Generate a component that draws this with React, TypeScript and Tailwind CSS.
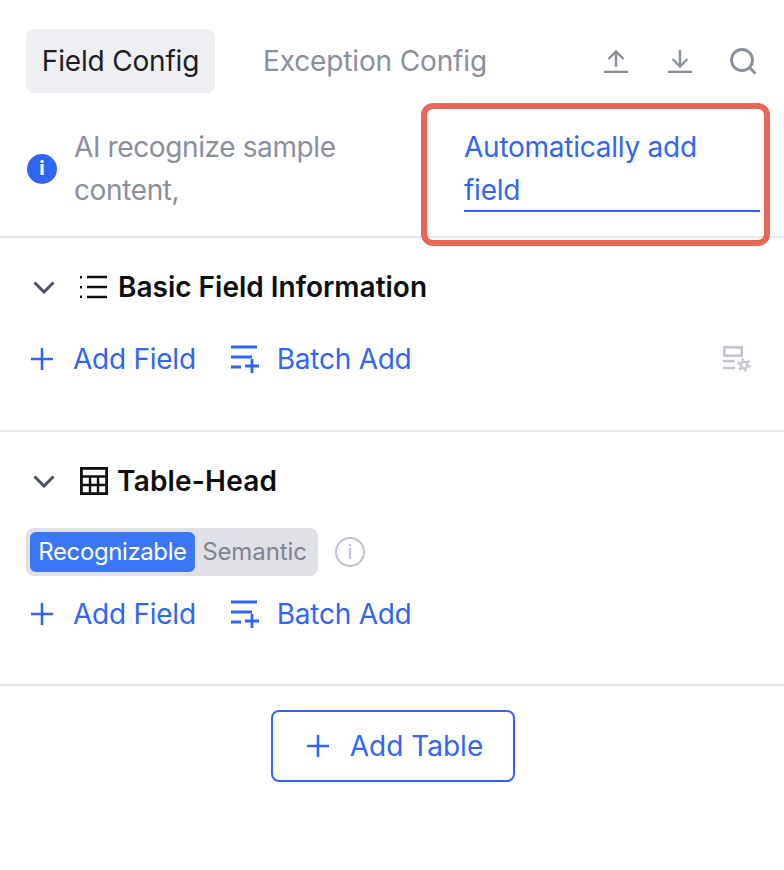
const BLUE = "#2f66f6";

const UploadIcon = ({ down = false }: { down?: boolean }) => (
  <svg width="24" height="24" viewBox="0 0 24 24" fill="none" stroke="#8b8f9c" strokeWidth="2.4">
    <path d="M0 23h24" strokeWidth="2.6" />
    {down ? <path d="M12 1v16M4.5 10l7.5 7.5 7.5-7.5" /> : <path d="M12 18V2.5M4.5 10L12 2.5l7.5 7.5" />}
  </svg>
);

const SearchIcon = () => (
  <svg width="27" height="27" viewBox="0 0 27 27" fill="none" stroke="#8b8f9c" strokeWidth="2.8">
    <circle cx="12" cy="12" r="10.5" />
    <path d="M19.5 19.5l6 6" />
  </svg>
);

const PlusIcon = () => (
  <svg width="22" height="22" viewBox="0 0 22 22" fill="none" stroke={BLUE} strokeWidth="2.6">
    <path d="M11 0v22M0 11h22" />
  </svg>
);

const BatchIcon = () => (
  <svg width="30" height="28" viewBox="0 0 30 28" fill="none" stroke={BLUE} strokeWidth="2.8">
    <path d="M1 2h26M1 12h21M1 22h10M15 21h14M22 14v14" />
  </svg>
);

const Chevron = () => (
  <svg width="22" height="14" viewBox="0 0 22 14" fill="none" stroke="#4c5261" strokeWidth="3">
    <path d="M1.5 2.5L11 12l9.5-9.5" />
  </svg>
);

const ListIcon = () => (
  <svg width="27" height="24" viewBox="0 0 27 24" fill="none" stroke="#111" strokeWidth="2.6">
    <path d="M7 2h20M7 12h20M7 22h20" />
    <path d="M1 1v2.4M1 11v2.4M1 20.6v2.4" strokeWidth="2" />
  </svg>
);

const TableIcon = () => (
  <svg width="28" height="28" viewBox="0 0 28 28" fill="none" stroke="#111" strokeWidth="2.8">
    <rect x="1.4" y="1.4" width="25.2" height="25.2" />
    <path d="M1 9.5h26M1 18h26M10 9.5V27M18 9.5V27" strokeWidth="2.4" />
  </svg>
);

const FieldSettingIcon = () => (
  <svg width="28" height="26" viewBox="0 0 28 26" fill="none" stroke="#c3c6d0" strokeWidth="2.6">
    <rect x="1.3" y="1.3" width="17.4" height="8.4" />
    <path d="M0 15h12M0 22h12" />
    <circle cx="21" cy="19" r="3.4" strokeWidth="2.4" />
    <circle cx="21" cy="19" r="5.6" strokeWidth="2.4" strokeDasharray="2.6 3.26" />
  </svg>
);

const FieldActions = () => (
  <div className="flex items-center text-[28px] leading-[44px] tracking-[-0.25px] text-[#2f66f6]">
    <span className="ml-[1px]"><PlusIcon /></span>
    <span className="ml-[20px]">Add Field</span>
    <span className="ml-[34px]"><BatchIcon /></span>
    <span className="ml-[17px]">Batch Add</span>
  </div>
);

export default function App() {
  return (
    <div className="relative w-[784px] h-[870px] bg-white overflow-hidden font-['Inter',sans-serif]">
      {/* tabs */}
      <div className="flex items-center pt-[29px] pl-[26px] pr-[27px]">
        <div className="w-[189px] h-[64px] rounded-lg bg-[#eeeff3] flex items-center justify-center text-[28px] tracking-[-0.18px] text-[#1c1e24]">
          Field Config
        </div>
        <div className="ml-[48px] text-[28px] tracking-[-0.14px] text-[#8b8f9c]">Exception Config</div>
        <div className="ml-auto flex items-center">
          <UploadIcon />
          <span className="ml-[40px]"><UploadIcon down /></span>
          <span className="ml-[38px]"><SearchIcon /></span>
        </div>
      </div>

      {/* recognize notice */}
      <div className="mt-[10px] h-[135px] border-b-2 border-[#e6e6ec] flex items-center pl-[27px] pb-[2px] text-[28px] leading-[43px]">
        <div className="w-[30px] h-[30px] rounded-full bg-[#2f66f6] flex items-center justify-center text-white text-[20px] font-bold shrink-0">
          i
        </div>
        <div className="ml-[17px] w-[300px] shrink-0 tracking-[-0.38px] text-[#8b8f9c]">AI recognize sample content,</div>
        <div className="ml-[90px] w-[296px] h-[86px] shrink-0 tracking-[-0.25px] text-[#2f66f6] border-b-2 border-[#2f66f6]">Automatically add field</div>
      </div>

      {/* basic fields */}
      <div className="h-[194px] border-b-2 border-[#e6e6ec] pl-[30px] pr-[33px] pt-[27px]">
        <div className="flex items-center h-[44px]">
          <span className="ml-[3px] flex"><Chevron /></span>
          <span className="ml-[25px] flex"><ListIcon /></span>
          <span className="ml-[11px] text-[28px] font-semibold text-[#0c0d10]">Basic Field Information</span>
        </div>
        <div className="flex items-center justify-between mt-[28px]">
          <FieldActions />
          <FieldSettingIcon />
        </div>
      </div>

      {/* table head */}
      <div className="h-[254px] border-b-2 border-[#e6e6ec] pl-[30px] pt-[27px]">
        <div className="flex items-center h-[44px]">
          <span className="ml-[3px] flex"><Chevron /></span>
          <span className="ml-[25px] flex"><TableIcon /></span>
          <span className="ml-[9px] text-[28px] font-semibold tracking-[0.2px] text-[#0c0d10]">Table-Head</span>
        </div>
        <div className="flex items-center -ml-[4px] mt-[25px]">
          <div className="flex items-center h-[48px] w-[292px] p-[4px] rounded-lg bg-[#e0e1e7] text-[24px]">
            <div className="w-[165px] h-[40px] rounded-md bg-[#3b76f6] text-white tracking-[-0.4px] flex items-center justify-center">Recognizable</div>
            <div className="flex-1 text-center text-[#7f8390] tracking-[-0.1px]">Semantic</div>
          </div>
          <div className="ml-[17px] w-[30px] h-[30px] rounded-full border-2 border-[#bcc0cc] flex items-center justify-center text-[#bcc0cc] text-[20px]">
            i
          </div>
        </div>
        <div className="mt-[16px]">
          <FieldActions />
        </div>
      </div>

      {/* add table */}
      <div className="flex justify-center pt-[24px] pl-[2px]">
        <div className="w-[244px] h-[72px] border-2 border-[#2f66f6] rounded-lg flex items-center justify-center pl-[4px] text-[28px] text-[#2f66f6]">
          <PlusIcon />
          <span className="ml-[21px]">Add Table</span>
        </div>
      </div>

      {/* highlight annotation */}
      <div className="absolute left-[421px] top-[103px] w-[349px] h-[143px] border-[6px] border-[#ea6658] rounded-xl" />
    </div>
  );
}
